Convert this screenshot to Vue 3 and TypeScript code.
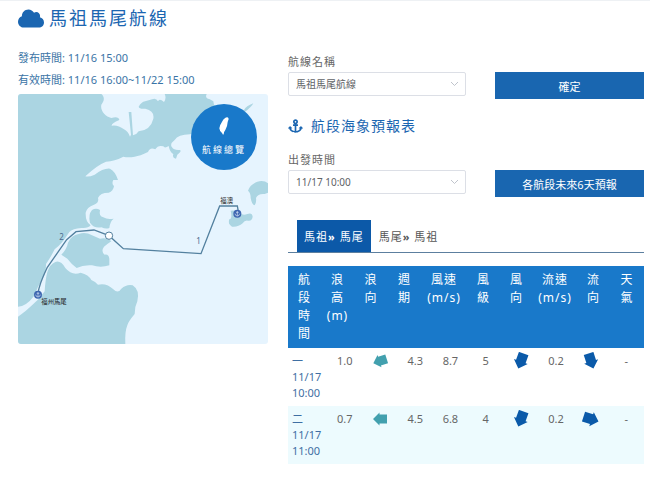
<script setup lang="ts">
import { ref } from 'vue'

interface ForecastRow {
  order: string
  date: string
  time: string
  waveHeight: string
  waveAngle: number
  period: string
  windSpeed: string
  windScale: string
  windAngle: number
  currentSpeed: string
  currentAngle: number
  weather: string
}

const route = ref('馬祖馬尾航線')
const departure = ref('11/17 10:00')
const activeTab = ref(0)

const tabs = [
  { from: '馬祖', to: '馬尾' },
  { from: '馬尾', to: '馬祖' },
]

const columns: string[] = [
  '航段時間',
  '浪高 (m)',
  '浪向',
  '週期',
  '風速 (m/s)',
  '風級',
  '風向',
  '流速 (m/s)',
  '流向',
  '天氣',
]

// Angles turn an arrow that points left, in degrees clockwise.
const rows: ForecastRow[] = [
  {
    order: '一', date: '11/17', time: '10:00', waveHeight: '1.0', waveAngle: -18, period: '4.3',
    windSpeed: '8.7', windScale: '5', windAngle: -70, currentSpeed: '0.2', currentAngle: -108, weather: '-',
  },
  {
    order: '二', date: '11/17', time: '11:00', waveHeight: '0.7', waveAngle: 0, period: '4.5',
    windSpeed: '6.8', windScale: '4', windAngle: -70, currentSpeed: '0.2', currentAngle: -162, weather: '-',
  },
]

const arrow = 'M1 8 7.5 1.5V3.5H15V12.5H7.5V14.5Z'
const turn = (angle: number): string => `rotate(${angle} 8 8)`
</script>

<template>
  <main class="page">
    <header class="page-head">
      <svg class="cloud" viewBox="0 32 640 448" aria-hidden="true">
        <path d="M537.6 226.6c4.1-10.7 6.4-22.4 6.4-34.6 0-53-43-96-96-96-19.7 0-38.1 6-53.3 16.2C367 64.2 315.3 32 256 32c-88.4 0-160 71.6-160 160 0 2.7.1 5.4.2 8.1C40.2 219.8 0 273.2 0 336c0 79.5 64.5 144 144 144h368c70.7 0 128-57.3 128-128 0-61.9-44-113.6-102.4-125.4z" />
      </svg>
      <h1>馬祖馬尾航線</h1>
    </header>

    <div class="columns">
      <section class="overview">
        <p class="meta">發布時間: 11/16 15:00</p>
        <p class="meta">有效時間: 11/16 16:00~11/22 15:00</p>
        <div class="map">
          <svg class="chart" viewBox="0 0 750 750">
            <rect class="sea" width="750" height="750" />
            <path class="land" d="M0 0H250C260 8 260 20 250 32C246 50 262 68 280 72Q302 66 304 78Q280 88 281 95Q300 92 318 106Q330 112 336 128L339 122L332 54H340L345 124Q356 122 362 112Q398 108 406 74Q410 50 382 44Q364 46 362 38C372 18 390 22 402 16Q414 10 420 22Q424 12 438 24Q446 12 440 0H566Q560 12 574 15L586 22L588 32L640 60L560 110L516 121Q480 122 470 138Q454 150 462 160Q468 170 486 168Q492 172 478 182L474 194Q462 192 466 180Q456 176 452 156Q440 164 436 157Q420 152 412 166Q396 158 390 174Q366 186 350 188Q330 192 316 188Q290 202 264 203Q236 214 202 247Q212 250 230 242Q256 222 276 224Q292 232 300 258H286Q280 270 288 276Q286 292 272 296Q246 296 240 312Q244 326 228 332Q206 340 203 356Q202 384 218 394Q210 404 190 402Q164 404 154 414Q130 452 110 466Q98 490 84 510Q84 540 76 550Q58 580 48 606Q24 638 0 638Z" />
            <path class="land" d="M222 348Q234 340 246 348Q242 368 256 370Q268 378 287 374Q276 382 274 402Q264 406 250 400Q228 404 216 386Q210 362 222 348Z" />
            <path class="land" d="M130 482Q146 466 150 446Q160 424 182 420Q202 412 222 424L246 434Q268 430 280 442Q268 450 258 458Q248 472 260 482Q272 480 274 494V514Q248 522 222 514Q196 512 176 522Q160 510 148 494Z" />
            <path class="land" d="M0 668Q24 652 42 634Q64 616 80 592Q82 556 88 534Q96 510 112 504Q128 498 142 522Q162 546 188 536Q212 542 220 558Q234 564 240 572Q266 566 286 586Q300 600 310 584Q326 570 344 574Q366 588 358 622Q350 638 350 660Q330 684 328 694Q320 714 322 750H0Z" />
            <path class="land" d="M678 48Q684 36 706 28Q700 40 680 54Z" />
            <path class="land" d="M750 268Q738 258 718 263Q696 272 690 290Q698 296 698 312Q702 334 710 334Q716 324 714 312Q720 298 740 300L750 296Z" />
            <path class="land" d="M638 350Q654 348 666 356Q674 366 688 360Q702 354 704 368Q702 382 690 380Q680 378 674 388Q660 400 642 398Q628 390 634 376Q644 374 638 350Z" />
            <path class="route" d="M60 600Q62 574 88 520L146 437L174 413L228 408L273 425L316 464L549 479L605 336H658L662 358" />
            <circle class="node" cx="273" cy="425" r="11" />
            <g class="port">
              <circle cx="60" cy="602" r="12" />
              <path d="M60 594v15M53 602q1 7 7 7t7-7M56 598h8" />
              <circle cx="658" cy="359" r="12" />
              <path d="M658 351v15M651 359q1 7 7 7t7-7M654 355h8" />
            </g>
            <text class="leg" x="124" y="437">2</text>
            <text class="leg" x="535" y="450">1</text>
            <text class="place" x="607" y="326">福澳</text>
            <text class="place" x="70" y="631">福州馬尾</text>
          </svg>
          <a class="badge" href="#overview">
            <svg class="island" viewBox="0 0 30 54" aria-hidden="true">
              <path d="M25 1Q16 2 10 13Q2 25 1 34Q2 44 9 48L12 53L14 52Q14 45 19 39Q26 25 26 15L29 6Q28 1 25 1Z" />
            </svg>
            <span>航線總覽</span>
          </a>
        </div>
      </section>

      <section class="forecast">
        <form @submit.prevent>
          <label class="label" for="route">航線名稱</label>
          <div class="control-row">
            <div class="select">
              <select id="route" v-model="route">
                <option>馬祖馬尾航線</option>
              </select>
              <svg viewBox="0 0 9 6" aria-hidden="true"><path d="M1 1 4.5 4.5 8 1" /></svg>
            </div>
            <button class="btn" type="submit">確定</button>
          </div>
        </form>

        <h2>
          <svg class="anchor" viewBox="0 0 576 512" aria-hidden="true">
            <path d="M12.971 352h32.394C67.172 454.735 181.944 512 288 512c106.229 0 220.853-57.38 242.635-160h32.394c10.691 0 16.045-12.926 8.485-20.485l-67.029-67.029c-4.686-4.686-12.284-4.686-16.971 0l-67.029 67.029c-7.56 7.56-2.206 20.485 8.485 20.485h35.146c-20.29 54.317-84.963 86.588-144.117 94.015V256h52c6.627 0 12-5.373 12-12v-40c0-6.627-5.373-12-12-12h-52v-5.47c37.281-13.226 64-48.834 64-90.677 0-52.98-43.201-95.943-96.249-95.85C235.2.096 192.225 42.889 192 95.437 191.82 137.448 218.591 173.258 256 186.53V192h-52c-6.627 0-12 5.373-12 12v40c0 6.627 5.373 12 12 12h52v190.015c-58.936-7.399-123.82-39.679-144.117-94.015h35.146c10.691 0 16.045-12.926 8.485-20.485l-67.029-67.029c-4.686-4.686-12.284-4.686-16.971 0L4.485 331.515C-3.074 339.074 2.28 352 12.971 352zM288 64c17.645 0 32 14.355 32 32s-14.355 32-32 32-32-14.355-32-32 14.355-32 32-32z" />
          </svg>
          航段海象預報表
        </h2>

        <form @submit.prevent>
          <label class="label" for="departure">出發時間</label>
          <div class="control-row">
            <div class="select">
              <select id="departure" v-model="departure">
                <option>11/17 10:00</option>
              </select>
              <svg viewBox="0 0 9 6" aria-hidden="true"><path d="M1 1 4.5 4.5 8 1" /></svg>
            </div>
            <button class="btn" type="submit">各航段未來6天預報</button>
          </div>
        </form>

        <div class="tabs" role="tablist">
          <button
            v-for="(tab, i) in tabs"
            :key="tab.from"
            class="tab"
            :class="{ active: activeTab === i }"
            type="button"
            role="tab"
            :aria-selected="activeTab === i"
            @click="activeTab = i"
          >{{ tab.from }}<b>»</b> {{ tab.to }}</button>
        </div>

        <table>
          <thead>
            <tr>
              <th v-for="column in columns" :key="column" scope="col">{{ column }}</th>
            </tr>
          </thead>
          <tbody>
            <tr v-for="row in rows" :key="row.time">
              <th scope="row">{{ row.order }}<br />{{ row.date }}<br />{{ row.time }}</th>
              <td>{{ row.waveHeight }}</td>
              <td><svg class="arrow wave" viewBox="0 0 16 16"><path :d="arrow" :transform="turn(row.waveAngle)" /></svg></td>
              <td>{{ row.period }}</td>
              <td>{{ row.windSpeed }}</td>
              <td>{{ row.windScale }}</td>
              <td><svg class="arrow" viewBox="0 0 16 16"><path :d="arrow" :transform="turn(row.windAngle)" /></svg></td>
              <td>{{ row.currentSpeed }}</td>
              <td><svg class="arrow" viewBox="0 0 16 16"><path :d="arrow" :transform="turn(row.currentAngle)" /></svg></td>
              <td>{{ row.weather }}</td>
            </tr>
          </tbody>
        </table>
      </section>
    </div>
  </main>
</template>

<style>
body {
  background: #fff;
}
</style>

<style scoped>
.page {
  border-top: 1px solid #eef1f4;
  padding: 5px 6px 12px 18px;
  box-sizing: border-box;
  font-family: "Noto Sans", "Noto Sans CJK TC", sans-serif;
  font-size: 11px;
  color: #666;
}

.page *,
.page *::before {
  box-sizing: border-box;
}

.page-head {
  display: flex;
  align-items: center;
  gap: 5px;
  height: 24px;
  color: #1b66b1;
}

.cloud {
  width: 26px;
  height: 19px;
  fill: currentColor;
}

h1 {
  margin: 0;
  font-size: 18px;
  line-height: 24px;
  font-weight: 400;
  letter-spacing: 2px;
}

.columns {
  display: grid;
  grid-template-columns: 250fr 356fr;
  gap: 20px;
  align-items: start;
  padding-top: 17px;
}

.meta {
  margin: 0;
  line-height: 22px;
  color: #3a74a6;
}

.map {
  position: relative;
  margin-top: 3px;
  border-radius: 3px;
  overflow: hidden;
}

.chart {
  display: block;
  width: 100%;
}

.sea {
  fill: #e6f4fe;
}

.land {
  fill: #abd5e2;
}

.route {
  fill: none;
  stroke: #53809f;
  stroke-width: 4;
}

.node {
  fill: #fff;
  stroke: #53809f;
  stroke-width: 3;
}

.port circle {
  fill: #3d66b0;
}

.port path {
  fill: none;
  stroke: #d5e3f5;
  stroke-width: 2;
}

.leg {
  font-size: 24px;
  fill: #4c6c8e;
}

.place {
  font-size: 19px;
  fill: #222;
}

.badge {
  position: absolute;
  top: 10px;
  right: 11px;
  display: flex;
  flex-direction: column;
  align-items: center;
  gap: 6px;
  width: 66px;
  height: 66px;
  padding-top: 13px;
  border-radius: 50%;
  background: #1979ca;
  color: #fff;
  font-size: 9px;
  line-height: 18px;
  letter-spacing: 2px;
  text-decoration: none;
}

.island {
  width: 10px;
  height: 18px;
  fill: currentColor;
}

.label {
  display: block;
  padding-top: 5px;
  line-height: 20px;
  letter-spacing: 1px;
}

.control-row {
  display: grid;
  grid-template-columns: 178fr 149fr;
  gap: 29px;
}

.select {
  position: relative;
  height: 24px;
}

select {
  display: block;
  width: 100%;
  height: 24px;
  padding: 0 20px 0 7px;
  border: 1px solid #dcdfe6;
  border-radius: 2px;
  background: #fff;
  appearance: none;
  font-family: inherit;
  font-size: 10px;
  color: #606266;
}

.select svg {
  position: absolute;
  top: 9px;
  right: 7px;
  width: 9px;
  height: 6px;
  fill: none;
  stroke: #c0c4cc;
  pointer-events: none;
}

.btn {
  height: 27px;
  padding: 0;
  border: 0;
  background: #1966b0;
  color: #fff;
  font-family: inherit;
  font-size: 11px;
}

h2 {
  display: flex;
  align-items: center;
  gap: 8px;
  margin: 16px 0 8px;
  font-size: 14px;
  line-height: 22px;
  font-weight: 400;
  letter-spacing: 1px;
  color: #1b66b1;
}

.anchor {
  width: 15px;
  height: 14px;
  fill: currentColor;
}

.tabs {
  display: flex;
  gap: 1px;
  margin-top: 23px;
  padding-left: 9px;
  border-bottom: 1px solid #5c7f9f;
}

.tab {
  height: 32px;
  padding: 0 7px 1px;
  border: 0;
  background: none;
  color: #555;
  font-family: inherit;
  font-size: 11px;
  letter-spacing: 1px;
}

.tab.active {
  background: #0c59a8;
  color: #fff;
}

table {
  display: block;
  margin-top: 13px;
}

thead,
tbody {
  display: block;
}

tr {
  display: grid;
}

thead tr {
  grid-template-columns: 33fr 33fr 34fr 33fr 46fr 33fr 33fr 44fr 33fr 34fr;
  padding: 5px 0;
  background: #1979ca;
  color: #fff;
}

thead th {
  padding: 0 5px;
  font-size: 12px;
  line-height: 18px;
  font-weight: 400;
  letter-spacing: 1px;
  text-align: center;
}

tbody tr {
  grid-template-columns: 39fr repeat(9, 35fr);
  padding: 5px 0;
}

tbody tr:nth-child(even) {
  background: #edfbfe;
}

tbody th {
  padding: 0 0 0 4px;
  line-height: 16px;
  font-weight: 400;
  text-align: left;
  color: #3f6fa3;
}

td {
  padding: 0;
  line-height: 16px;
  text-align: center;
}

.arrow {
  display: block;
  width: 18px;
  height: 18px;
  margin: -1px auto;
  fill: #0b5aa9;
}

.arrow.wave {
  width: 16px;
  height: 16px;
  margin: 0 auto;
  fill: #42a0ae;
}
</style>
